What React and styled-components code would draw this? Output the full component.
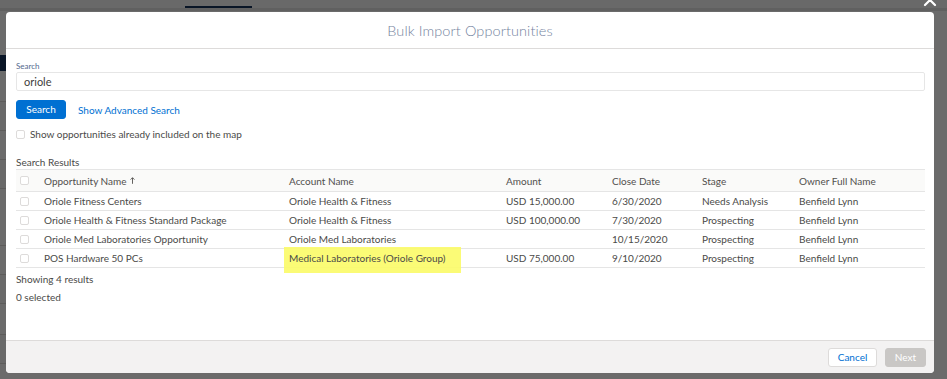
import React from "react";
import styled, { createGlobalStyle } from "styled-components";

const Global = createGlobalStyle`
  html, body { margin: 0; padding: 0; }
  body {
    width: 947px; height: 379px; overflow: hidden;
    background: #ffffff;
    font-family: Lato, "Open Sans", "Liberation Sans", sans-serif;
    color: #3e3e3c;
  }
`;

const Page = styled.div`
  position: relative;
  width: 947px;
  height: 379px;
  overflow: hidden;
  background: #ffffff;
`;

const PageTabs = styled.div`
  height: 8px;
  display: flex;
  background: #fafaf9;
  border-bottom: 3px solid #e5e5e5;
  padding-left: 185px;
`;

const PageTab = styled.div`
  width: 67px;
  align-self: flex-end;
  height: 2px;
  background: #16325c;
`;

const PageBody = styled.div`
  width: 6px;
  overflow: hidden;
  display: flex;
  flex-direction: column;
  padding-top: 8px;
`;

const PageTitle = styled.div`
  height: 36px;
`;

const PageBand = styled.div`
  height: 16px;
  background: #16325c;
`;

const PageRow = styled.div`
  height: ${(p) => p.$h || 27}px;
  background: ${(p) => p.$bg || "transparent"};
  border-bottom: 1px solid #dddbda;
`;

const Backdrop = styled.div`
  position: absolute;
  inset: 0;
  background: rgba(0, 0, 0, 0.58);
`;

const Close = styled.div`
  position: absolute;
  top: -8px;
  left: 922px;
  width: 16px;
  height: 16px;
`;

const Modal = styled.div`
  position: absolute;
  left: 6px;
  top: 12px;
  width: 928px;
  height: 361px;
  background: #ffffff;
  border-radius: 4px;
  display: flex;
  flex-direction: column;
  overflow: hidden;
`;

const Header = styled.div`
  height: 36px;
  border-bottom: 1px solid #dddbda;
  display: flex;
  align-items: center;
  justify-content: center;
  font-size: 14.5px;
  font-weight: 300;
  color: #74839e;
  letter-spacing: 0.1px;
`;

const Body = styled.div`
  flex: 1;
  padding: 12px 9px 0 10px;
  display: flex;
  flex-direction: column;
`;

const Label = styled.div`
  font-size: 8px;
  color: #54698d;
  height: 11px;
  line-height: 11px;
`;

const Input = styled.div`
  height: 17px;
  border: 1px solid #e6e6e6;
  border-radius: 2px;
  padding-left: 7px;
  font-size: 11px;
  line-height: 17px;
  color: #3e3e3c;
`;

const SearchRow = styled.div`
  display: flex;
  align-items: center;
  gap: 12px;
  margin-top: 9px;
`;

const Button = styled.button`
  height: 19px;
  padding: 0;
  border-radius: 3px;
  font-family: inherit;
  font-size: 10px;
  line-height: 17px;
  border: 1px solid ${(p) => (p.$variant === "brand" ? "#0070d2" : p.$variant === "disabled" ? "#c9c7c5" : "#dddbda")};
  background: ${(p) => (p.$variant === "brand" ? "#0070d2" : p.$variant === "disabled" ? "#c9c7c5" : "#ffffff")};
  color: ${(p) => (p.$variant === "neutral" ? "#0070d2" : "#ffffff")};
  width: ${(p) => p.$w}px;
`;

const Link = styled.span`
  font-size: 10px;
  color: #0070d2;
`;

const CheckRow = styled.div`
  display: flex;
  align-items: center;
  gap: 5px;
  margin-top: 10px;
  font-size: 10px;
  color: #4a4a48;
  height: 10px;
`;

const Box = styled.span`
  display: inline-block;
  width: 7px;
  height: 7px;
  border: 1px solid #dddbda;
  border-radius: 2px;
  background: #ffffff;
  flex: none;
`;

const Caption = styled.div`
  margin-top: 17px;
  font-size: 10px;
  height: 12px;
  line-height: 12px;
  color: #4a4a48;
`;

const Table = styled.div`
  margin-top: 1px;
  display: flex;
  flex-direction: column;
  border-top: 1px solid #e5e5e5;
`;

const cols = "28px 245px 217px 106px 90px 97px 1fr";

const HeadRow = styled.div`
  display: grid;
  grid-template-columns: ${cols};
  height: 21px;
  align-items: center;
  background: #fafaf9;
  border-bottom: 1px solid #e5e5e5;
  font-size: 10px;
  color: #514f4d;
`;

const Row = styled.div`
  display: grid;
  grid-template-columns: ${cols};
  height: 18px;
  align-items: center;
  border-bottom: 1px solid #e5e5e5;
  font-size: 10px;
  color: #4a4a48;
`;

const BoxCell = styled.div`
  padding-left: 4px;
  display: flex;
  align-items: center;
`;

const Cell = styled.div`
  position: relative;
  white-space: nowrap;
  display: flex;
  align-items: center;
  gap: 3px;
`;

const Mark = styled.span`
  position: absolute;
  left: -5px;
  top: -5px;
  width: 177px;
  height: 26px;
  background: #fbfb6a;
  opacity: 0.92;
`;

const CellText = styled.span`
  position: relative;
`;

const Note = styled.div`
  font-size: 10px;
  color: #4a4a48;
  height: 12px;
  line-height: 12px;
  margin-top: ${(p) => p.$mt}px;
`;

const Footer = styled.div`
  height: 32px;
  border-top: 1px solid #dddbda;
  background: #f3f2f2;
  display: flex;
  align-items: center;
  justify-content: flex-end;
  gap: 8px;
  padding-right: 8px;
`;

const rows = [
  ["Oriole Fitness Centers", "Oriole Health & Fitness", "USD 15,000.00", "6/30/2020", "Needs Analysis", "Benfield Lynn"],
  ["Oriole Health & Fitness Standard Package", "Oriole Health & Fitness", "USD 100,000.00", "7/30/2020", "Prospecting", "Benfield Lynn"],
  ["Oriole Med Laboratories Opportunity", "Oriole Med Laboratories", "", "10/15/2020", "Prospecting", "Benfield Lynn"],
  ["POS Hardware 50 PCs", "Medical Laboratories (Oriole Group)", "USD 75,000.00", "9/10/2020", "Prospecting", "Benfield Lynn", true],
];

const SortArrow = () => (
  <svg width="5" height="7" viewBox="0 0 5 7" aria-hidden="true">
    <path d="M2.5 6.8 V0.8 M0.6 2.6 L2.5 0.7 L4.4 2.6" stroke="#514f4d" strokeWidth="0.9" fill="none" />
  </svg>
);

export default function App() {
  return (
    <>
      <Global />
      <Page>
        <PageTabs>
          <PageTab />
        </PageTabs>
        <PageBody>
          <PageTitle />
          <PageBand />
          <PageRow $h={30} />
          <PageRow $h={28} $bg="#fafaf9" />
          <PageRow $h={28} />
          <PageRow $h={28} $bg="#fafaf9" />
          <PageRow $h={56} />
          <PageRow $h={28} />
          <PageRow $h={28} $bg="#fafaf9" />
          <PageRow $h={30} />
          <PageRow $h={28} $bg="#fafaf9" />
        </PageBody>
        <Backdrop />
        <Close>
          <svg width="16" height="16" viewBox="0 0 16 16">
            <path d="M3 3 L13 13 M13 3 L3 13" stroke="#ffffff" strokeWidth="2.2" strokeLinecap="round" />
          </svg>
        </Close>
        <Modal>
          <Header>Bulk Import Opportunities</Header>
          <Body>
            <Label>Search</Label>
            <Input>oriole</Input>
            <SearchRow>
              <Button $variant="brand" $w={50}>Search</Button>
              <Link>Show Advanced Search</Link>
            </SearchRow>
            <CheckRow>
              <Box />
              <span>Show opportunities already included on the map</span>
            </CheckRow>
            <Caption>Search Results</Caption>
            <Table>
              <HeadRow>
                <BoxCell><Box /></BoxCell>
                <Cell>Opportunity Name <SortArrow /></Cell>
                <Cell>Account Name</Cell>
                <Cell>Amount</Cell>
                <Cell>Close Date</Cell>
                <Cell>Stage</Cell>
                <Cell>Owner Full Name</Cell>
              </HeadRow>
              {rows.map((r) => (
                <Row key={r[0]}>
                  <BoxCell><Box /></BoxCell>
                  <Cell>{r[0]}</Cell>
                  <Cell>
                    {r[6] && <Mark />}
                    <CellText>{r[1]}</CellText>
                  </Cell>
                  <Cell>{r[2]}</Cell>
                  <Cell>{r[3]}</Cell>
                  <Cell>{r[4]}</Cell>
                  <Cell>{r[5]}</Cell>
                </Row>
              ))}
            </Table>
            <Note $mt={5}>Showing 4 results</Note>
            <Note $mt={6}>0 selected</Note>
          </Body>
          <Footer>
            <Button $variant="neutral" $w={49}>Cancel</Button>
            <Button $variant="disabled" $w={41}>Next</Button>
          </Footer>
        </Modal>
      </Page>
    </>
  );
}
